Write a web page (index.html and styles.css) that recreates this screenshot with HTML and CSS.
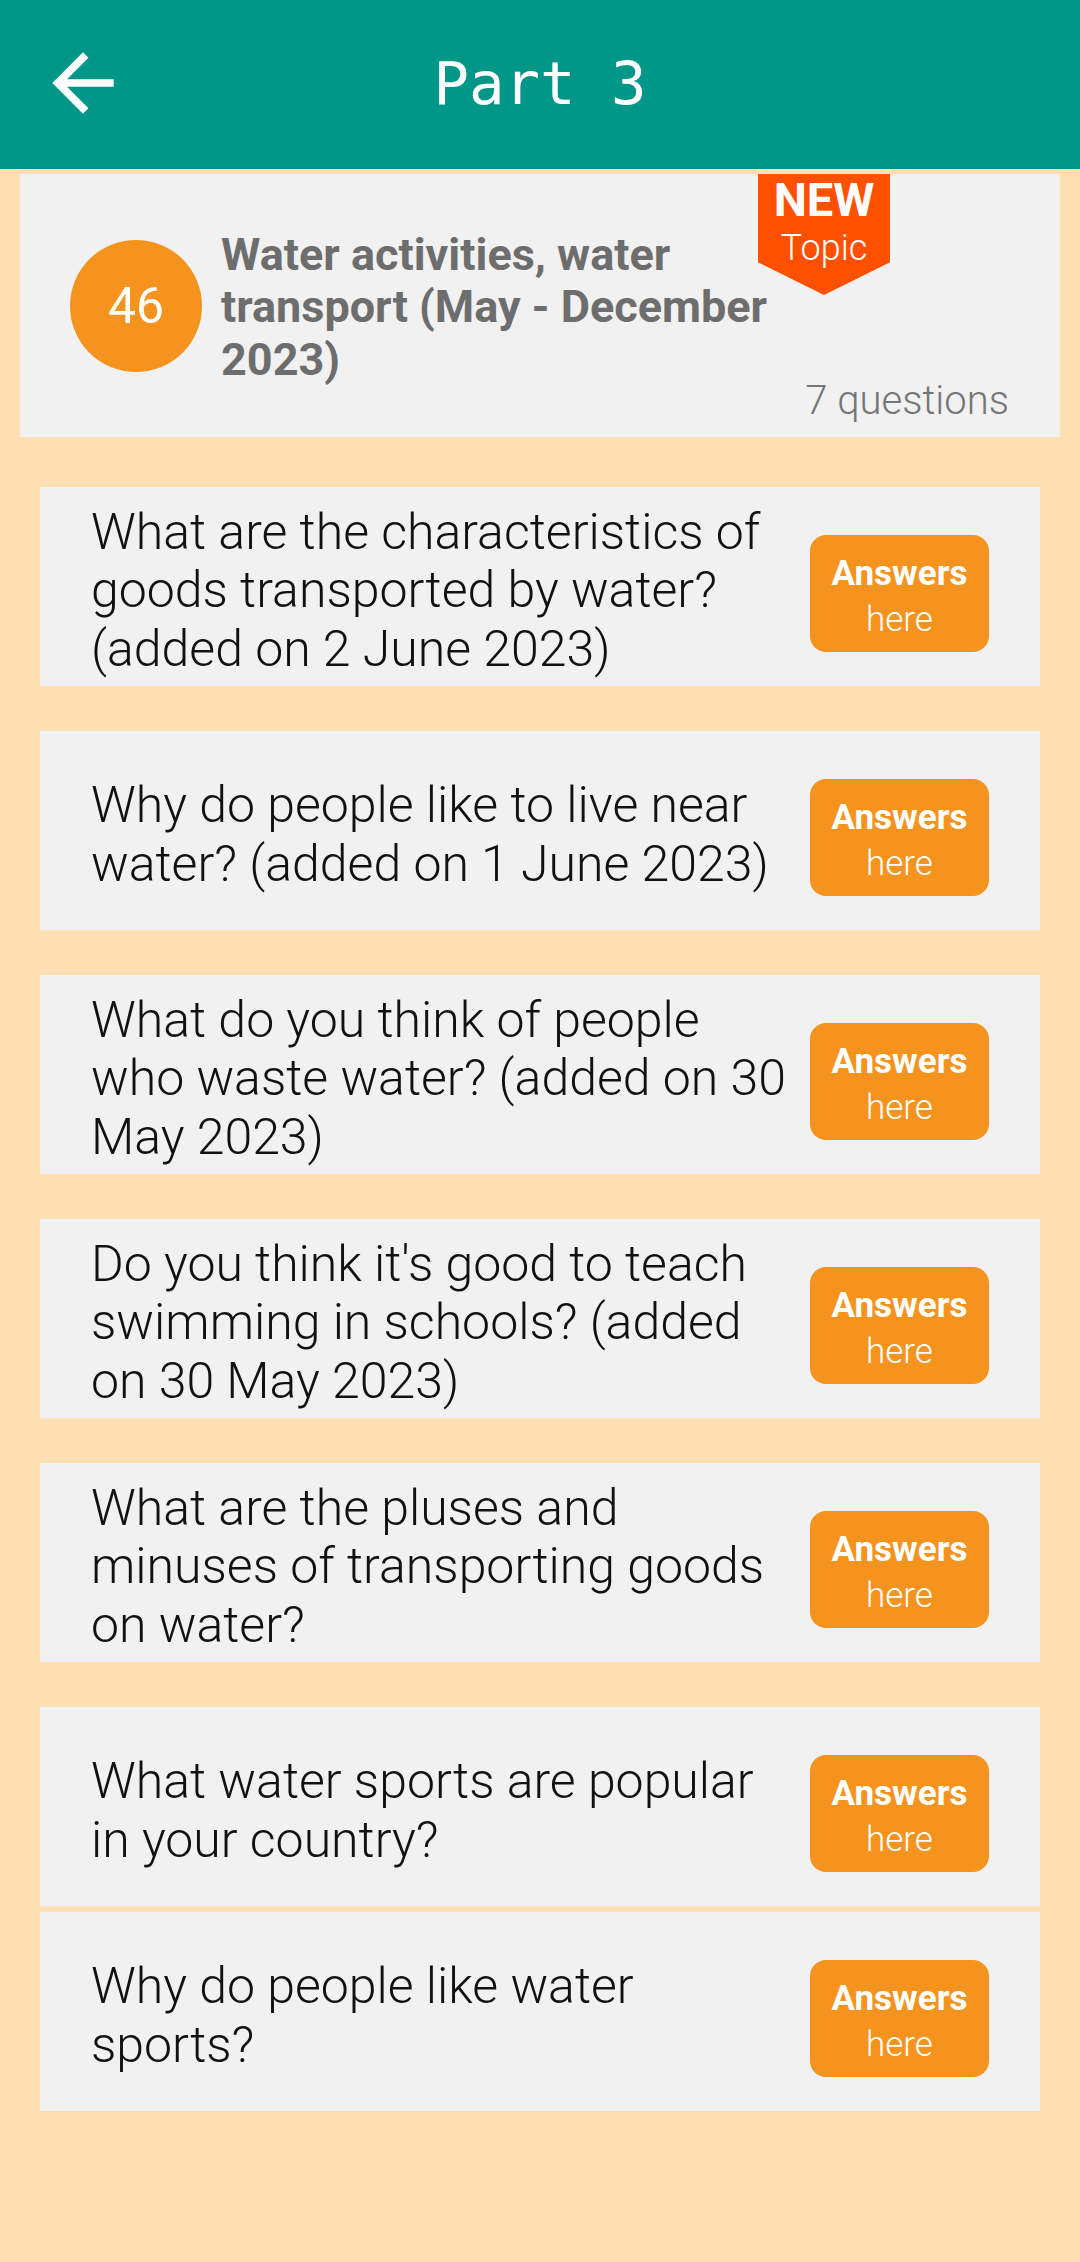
FILE: index.html
```html
<!DOCTYPE html>
<html lang="en">
<head>
<meta charset="utf-8">
<title>Part 3</title>
<link rel="stylesheet" href="styles.css">
</head>
<body>
<header class="appbar">
  <div class="appbar-left">
    <svg class="back-icon" viewBox="0 0 24 24" aria-hidden="true"><path d="M20 11H7.83l5.59-5.59L12 4l-8 8 8 8 1.410-1.41L7.830 13H20v-2z" fill="#ffffff"/></svg>
  </div>
  <h1 class="appbar-title">Part 3</h1>
  <div class="appbar-right"></div>
</header>

<section class="topic-card">
  <div class="topic-num">46</div>
  <div class="topic-title">Water activities, water transport (May - December 2023)</div>
  <div class="new-badge"><span class="new-word">NEW</span><span class="new-topic">Topic</span></div>
  <div class="topic-count">7 questions</div>
</section>

<main class="questions">
  <div class="q-card">
    <p class="q-text">What are the characteristics of goods transported by water? (added on 2 June 2023)</p>
    <a class="answer-btn"><span class="ans-main">Answers</span><span class="ans-sub">here</span></a>
  </div>
  <div class="q-card">
    <p class="q-text">Why do people like to live near water? (added on 1 June 2023)</p>
    <a class="answer-btn"><span class="ans-main">Answers</span><span class="ans-sub">here</span></a>
  </div>
  <div class="q-card">
    <p class="q-text">What do you think of people who waste water? (added on 30 May 2023)</p>
    <a class="answer-btn"><span class="ans-main">Answers</span><span class="ans-sub">here</span></a>
  </div>
  <div class="q-card">
    <p class="q-text">Do you think it's good to teach swimming in schools? (added on 30 May 2023)</p>
    <a class="answer-btn"><span class="ans-main">Answers</span><span class="ans-sub">here</span></a>
  </div>
  <div class="q-card">
    <p class="q-text">What are the pluses and minuses of transporting goods on water?</p>
    <a class="answer-btn"><span class="ans-main">Answers</span><span class="ans-sub">here</span></a>
  </div>
  <div class="q-card q-card-tight">
    <p class="q-text">What water sports are popular in your country?</p>
    <a class="answer-btn"><span class="ans-main">Answers</span><span class="ans-sub">here</span></a>
  </div>
  <div class="q-card">
    <p class="q-text">Why do people like water sports?</p>
    <a class="answer-btn"><span class="ans-main">Answers</span><span class="ans-sub">here</span></a>
  </div>
</main>
</body>
</html>
```

FILE: styles.css
```css
* { box-sizing: border-box; }

html, body {
  margin: 0;
  padding: 0;
}

body {
  width: 1080px;
  min-height: 2262px;
  background: #ffe0b2;
  font-family: Roboto, "Noto Sans", "Liberation Sans", sans-serif;
}

.appbar {
  height: 169px;
  background: #009688;
  display: grid;
  grid-template-columns: 1fr auto 1fr;
  align-items: center;
}

.appbar-left {
  display: flex;
  align-items: center;
  padding-left: 37px;
}

.back-icon {
  width: 92px;
  height: 92px;
  display: block;
  margin-top: -4px;
}

.appbar-title {
  margin: 0;
  font-family: "DejaVu Sans Mono", "Liberation Mono", monospace;
  font-weight: normal;
  font-size: 59px;
  color: #ffffff;
  line-height: 1;
  margin-top: -2px;
}

.topic-card {
  position: relative;
  margin: 5px 20px 0 20px;
  height: 263px;
  background: #f1f1f1;
  display: flex;
  align-items: center;
  padding-left: 50px;
}

.topic-num {
  width: 132px;
  height: 132px;
  flex: 0 0 132px;
  border-radius: 50%;
  background: #f4941f;
  color: #ffffff;
  font-size: 50px;
  display: flex;
  align-items: center;
  justify-content: center;
  margin-top: 1px;
}

.topic-title {
  margin-left: 19px;
  width: 560px;
  font-weight: bold;
  font-size: 45px;
  line-height: 52.6px;
  color: #6d6d6d;
  margin-top: 4px;
}

.new-badge {
  position: absolute;
  top: 0;
  left: 738px;
  width: 132px;
  height: 121px;
  background: #ff5000;
  clip-path: polygon(0 0, 100% 0, 100% 73%, 50% 100%, 0 73%);
  display: flex;
  flex-direction: column;
  align-items: center;
  color: #ffffff;
  padding-top: 5px;
}

.new-word {
  font-weight: bold;
  font-size: 47px;
  line-height: 42px;
}

.new-topic {
  font-weight: 300;
  font-size: 36px;
  line-height: 40px;
  margin-top: 7px;
}

.topic-count {
  position: absolute;
  right: 51px;
  bottom: 13px;
  font-size: 40px;
  font-weight: 300;
  color: #757575;
  line-height: 46px;
}

.questions {
  margin-top: 50px;
  display: flex;
  flex-direction: column;
}

.q-card {
  margin: 0 40px 45px 40px;
  height: 199px;
  background: #f1f1f1;
  display: flex;
  align-items: center;
  padding: 0 51px;
}

.q-card-tight {
  margin-bottom: 6px;
}

.q-text {
  margin: 8px 0 0 0;
  width: 701px;
  font-size: 50px;
  font-weight: 300;
  line-height: 58.4px;
  color: #111111;
}

.answer-btn {
  margin-left: auto;
  width: 179px;
  height: 117px;
  flex: 0 0 179px;
  border-radius: 16px;
  background: #f5931f;
  color: #ffffff;
  display: flex;
  flex-direction: column;
  align-items: center;
  justify-content: center;
  margin-top: 13px;
  padding-top: 7px;
}

.ans-main {
  font-weight: bold;
  font-size: 35px;
  line-height: 46px;
}

.ans-sub {
  font-weight: 300;
  font-size: 35px;
  line-height: 46px;
}
```
